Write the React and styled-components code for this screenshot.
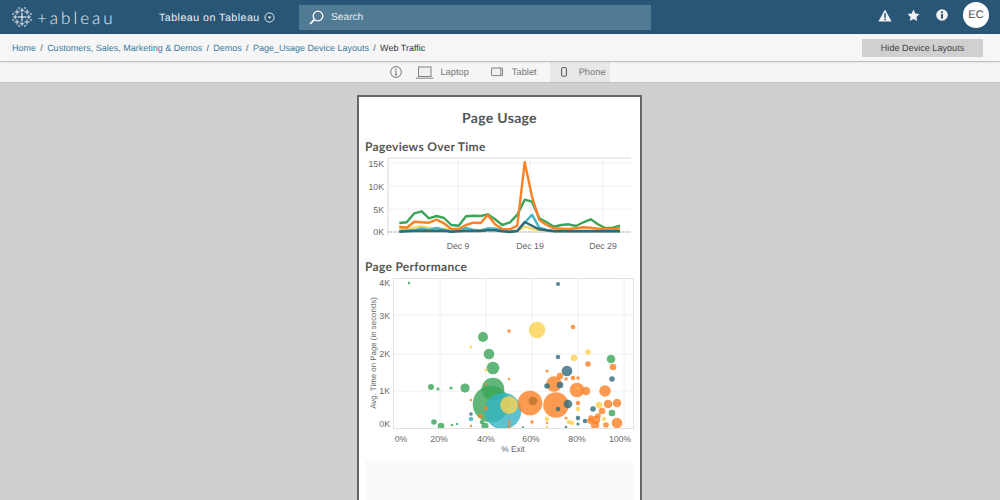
import React from "react";
import styled, { createGlobalStyle } from "styled-components";

const Global = createGlobalStyle`
  html, body { margin: 0; padding: 0; height: 100%; overflow: hidden; }
  body { font-family: "Liberation Sans", Arial, sans-serif; background: #cfcfcf; text-rendering: geometricPrecision; }
  #root { height: 500px; }
`;

const Page = styled.div`
  width: 1000px; height: 500px; display: flex; flex-direction: column; overflow: hidden; background: #cfcfcf;
`;
const TopBar = styled.header`
  height: 34px; flex: none; background: #2a5676; display: flex; align-items: center; color: #fff;
`;
const Logo = styled.div`
  display: flex; align-items: center; gap: 5px; width: 159px; padding-left: 12px; box-sizing: border-box; flex: none;
`;
const Wordmark = styled.span`
  font-family: Lato, sans-serif; font-weight: 300; font-size: 17px; letter-spacing: 3px; white-space: nowrap; color: #e8eef2; line-height: 1;
`;
const SiteName = styled.div`
  width: 140px; flex: none; display: flex; align-items: center; gap: 4px; padding-top: 1px; font-size: 10.6px; letter-spacing: 0.5px; color: #eef2f5; white-space: nowrap;
`;
const SearchBox = styled.div`
  width: 352px; height: 25px; flex: none; background: #517a94; display: flex; align-items: center; gap: 7px; padding-left: 10px; box-sizing: border-box; font-size: 10.2px; color: #e6edf1;
`;
const TopIcons = styled.div`
  margin-left: auto; display: flex; align-items: center; padding-right: 11px; gap: 15.5px;
`;
const Avatar = styled.div`
  width: 26px; height: 26px; border-radius: 50%; background: #fff; color: #3a4a58; font-size: 11px; display: flex; align-items: center; justify-content: center; margin-top: -4px;
`;
const IconSlot = styled.span`
  display: flex; margin-top: -4px;
`;
const CrumbBar = styled.nav`
  height: 27px; flex: none; background: #f6f6f6; display: flex; align-items: center; padding: 0 17px 0 12px; font-size: 9px; color: #444; box-shadow: 0 1px 2px rgba(0,0,0,.12); position: relative; white-space: nowrap;
`;
const Crumb = styled.span`
  color: #3a7a9e;
`;
const Sep = styled.span`
  margin: 0 4.3px; color: #555;
`;
const Current = styled.span`
  color: #333;
`;
const HideButton = styled.div`
  margin-left: auto; width: 121px; height: 18px; background: #d0d0d0; color: #444; font-size: 9.1px; display: flex; align-items: center; justify-content: center;
`;
const DeviceBar = styled.div`
  height: 20px; margin-top: 1px; flex: none; background: #f5f5f5; border-bottom: 1px solid #c4c4c4; display: flex; justify-content: center; align-items: stretch; font-size: 9.3px; color: #777;
`;
const InfoItem = styled.div`
  display: flex; align-items: center; padding: 0 6px 0 0;
`;
const DeviceTab = styled.div`
  display: flex; align-items: center; gap: ${p => p.$gap}px; padding: 0 ${p => p.$right}px 0 ${p => p.$left}px; background: ${p => (p.$active ? "#e8e8e8" : "transparent")};
`;
const Canvas = styled.main`
  flex: 1; min-height: 0; padding-top: 12px; display: flex; justify-content: center; background: #cfcfcf;
`;
const Phone = styled.div`
  width: 285px; height: 420px; box-sizing: border-box; border: 2px solid #666; background: #fff; padding: 0 6px; margin-left: -1px; flex: none; overflow: hidden;
`;
const Title = styled.h1`
  margin: 11px 0 11px; text-align: center; font-family: Lato, sans-serif; font-size: 14px; line-height: 20px; font-weight: 700; letter-spacing: .3px; color: #555;
`;
const SectionTitle = styled.h2`
  margin: 0; font-family: Lato, sans-serif; font-size: 12px; line-height: 16px; font-weight: 700; letter-spacing: .3px; color: #555;
`;
const ChartSvg = styled.svg`
  display: block;
`;
const AxisText = styled.text`
  font-family: "Liberation Sans", Arial, sans-serif; font-size: ${p => p.$size || 8.7}px; fill: #666;
`;
const EmptyPanel = styled.div`
  height: 60px; margin: 6px 0 0 0; background: #fafafa; width: 268px;
`;

/* ---- icons ---- */
const crosses = [
  [10, 10, 4.2, 1.2], [10, 3.2, 2.2, .9], [10, 16.8, 2.2, .9], [3.2, 10, 2.2, .9], [16.8, 10, 2.2, .9],
  [5, 5, 2.6, .9], [15, 5, 2.6, .9], [5, 15, 2.6, .9], [15, 15, 2.6, .9],
  [1, 7, 1, .6], [19, 7, 1, .6], [1, 13, 1, .6], [19, 13, 1, .6], [7, 1, 1, .6], [13, 1, 1, .6], [7, 19, 1, .6], [13, 19, 1, .6],
];
const TableauMark = () => (
  <svg width="20" height="20" viewBox="0 0 20 20" fill="#e8eef2">
    {crosses.map(([x, y, a, w], i) => (
      <g key={i}>
        <rect x={x - a} y={y - w / 2} width={a * 2} height={w} />
        <rect x={x - w / 2} y={y - a} width={w} height={a * 2} />
      </g>
    ))}
  </svg>
);
const Chevron = () => (
  <svg width="11" height="11" viewBox="0 0 11 11" fill="none" stroke="#e8eef2">
    <circle cx="5.5" cy="5.5" r="4.6" />
    <path d="M3.6 4.6h3.8L5.5 6.9z" fill="#e8eef2" stroke="none" />
  </svg>
);
const SearchIcon = () => (
  <svg width="15" height="15" viewBox="0 0 15 15" fill="none" stroke="#fff" strokeWidth="1.3">
    <circle cx="9" cy="6" r="4.8" />
    <path d="M5.6 9.4L1.2 13.8" strokeWidth="1.7" />
  </svg>
);
const Warn = () => (
  <svg width="14" height="13" viewBox="0 0 14 13">
    <path d="M7 .5L13.6 12.5H.4z" fill="#f0f3f5" />
    <rect x="6.2" y="4.2" width="1.6" height="4.6" fill="#2a5676" />
    <rect x="6.2" y="9.6" width="1.6" height="1.6" fill="#2a5676" />
  </svg>
);
const Star = () => (
  <svg width="13" height="13" viewBox="0 0 13 13">
    <path d="M6.5.6l1.8 3.9 4.2.5-3.1 2.9.8 4.2-3.7-2.1-3.7 2.1.8-4.2L.5 5l4.2-.5z" fill="#f0f3f5" />
  </svg>
);
const InfoSolid = () => (
  <svg width="12" height="12" viewBox="0 0 12 12">
    <circle cx="6" cy="6" r="5.8" fill="#f0f3f5" />
    <rect x="5" y="5" width="2" height="4.6" fill="#2a5676" />
    <rect x="5" y="2.4" width="2" height="1.7" fill="#2a5676" />
  </svg>
);
const InfoLine = () => (
  <svg width="12" height="12" viewBox="0 0 12 12" fill="none" stroke="#666" strokeWidth=".9">
    <circle cx="6" cy="6" r="5.4" />
    <path d="M6 5.2v3.6M4.9 8.8h2.2M5 5.2h1" />
    <circle cx="6" cy="3.2" r=".7" fill="#666" stroke="none" />
  </svg>
);
const LaptopIcon = () => (
  <svg width="18" height="13" viewBox="0 0 18 13" fill="none" stroke="#777" strokeWidth=".9">
    <rect x="2.5" y="1" width="12.5" height="9.5" fill="#f0f0f0" />
    <path d="M0 12.2h17.6" />
  </svg>
);
const TabletIcon = () => (
  <svg width="12" height="10" viewBox="0 0 12 10" fill="none" stroke="#777" strokeWidth=".9">
    <rect x=".5" y="1" width="11" height="7.6" rx=".6" fill="#f0f0f0" />
    <path d="M9.8 1v7.6" />
  </svg>
);
const PhoneIcon = () => (
  <svg width="6" height="10" viewBox="0 0 6 10" fill="none" stroke="#555" strokeWidth="1">
    <rect x=".6" y=".6" width="4.8" height="8.6" rx=".8" />
  </svg>
);

/* ---- line chart, screen coordinates relative to the chart origin (365,155) ---- */
const xs = [133,155,178,200,222,245,267,289,311,333,355,377,398,420,442,465,487,509,531,553,575,597,619,641,663,685,707,729,751,773,795];
const toPts = ys => xs.map((x, i) => `${(355 + x / 3 - 365).toFixed(1)},${(130 + ys[i] / 3 - 155).toFixed(1)}`).join(" ");
const series = [
  ["#f9d65f", [297,298,293,289,294,297,296,300,301,299,300,300,298,296,300,304,303,290,296,300,302,303,303,303,304,302,303,303,304,303,303]],
  ["#45b5c6", [303,302,301,295,300,294,300,304,302,294,300,302,295,296,301,304,302,278,254,293,300,303,303,303,303,303,303,303,303,303,303]],
  ["#3aa557", [279,277,250,244,265,258,264,285,287,259,257,258,253,268,285,277,254,209,215,265,277,290,285,283,288,277,268,283,295,293,287]],
  ["#fa8124", [290,293,275,277,278,269,280,297,297,285,278,279,255,283,297,298,287,97,200,270,285,295,296,297,295,292,293,296,298,298,295]],
  ["#2f6a7c", [305,304,303,302,303,303,302,305,304,303,303,303,301,301,304,306,303,276,287,298,301,304,304,304,304,304,304,304,304,304,304]],
];
const LineChart = () => (
  <ChartSvg width="271" height="104" viewBox="0 0 271 104">
    {[8, 31, 54].map(y => <line key={y} x1="23" x2="266" y1={y} y2={y} stroke="#f0f0f0" />)}
    {[93, 165, 238].map(x => <line key={x} x1={x} x2={x} y1="3" y2="77" stroke="#f0f0f0" />)}
    <line x1="23" x2="266" y1="3" y2="3" stroke="#dcdcdc" />
    <line x1="23" x2="23" y1="3" y2="81" stroke="#d8d8d8" />
    <line x1="23" x2="266" y1="77" y2="77" stroke="#999" strokeDasharray="1.5 1" />
    {series.map(([c, ys]) => (
      <polyline key={c} points={toPts(ys)} fill="none" stroke={c} strokeWidth="2.4" strokeLinejoin="round" />
    ))}
    {["15K", "10K", "5K", "0K"].map((t, i) => (
      <AxisText key={t} x="19" y={[12, 35, 58, 80][i]} textAnchor="end">{t}</AxisText>
    ))}
    {[["Dec 9", 93], ["Dec 19", 165], ["Dec 29", 238]].map(([t, x]) => (
      <AxisText key={t} x={x} y="94" textAnchor="middle">{t}</AxisText>
    ))}
  </ChartSvg>
);

/* ---- scatter: screen coordinates ---- */
const G = "#3aa557", Y = "#fdd24f", O = "#fa8124", T = "#2f6a7c", B = "#33b3c4";
const bubbles = [
  [491,403,18,G],[493,388,11,G],[503,410,18,B],[509,404,8.5,Y],[530,402,12,O],[533,400,4,"#b9762c"],[556,404,12.5,O],
  [554,383,7.5,O],[577,389,7,O],[605,390,5.5,O],[586,390,4,O],[537,329,8,Y],[483,336,4.7,G],[489,353,5,G],[493,367,6,G],
  [465,387,4.3,G],[431,386,2.7,G],[438,388,1.3,G],[451,387,1.3,G],[409,282,1,G],[471,346,1.3,Y],[486,369,1.3,Y],
  [558,283,1.8,T],[509,330,1.5,O],[573,326,2,O],[558,356,2,T],[588,351,2.5,Y],[574,357,3,Y],[611,358,4,G],[588,363,2.5,O],
  [613,366,3,O],[547,370,1.3,O],[567,370,5,T],[560,375,3,O],[573,377,2,O],[578,377,1.5,O],[566,378,1.5,O],[612,378,2.5,T],
  [509,378,1,O],[486,383,1,O],[471,399,1,O],[486,407,2,O],[471,413,1.5,T],[480,415,2,O],[471,418,2,B],[434,421,2.5,G],
  [441,425,3,G],[452,424,1,G],[457,423,1,G],[471,425,1,O],[485,425,3.3,G],[482,421,2,G],[558,408,2,T],[568,403,4,T],
  [547,385,2.5,T],[560,384,3,T],[578,387,1,Y],[578,402,2,O],[578,408,2,Y],[599,404,3,Y],[593,408,2.5,T],[608,403,4,O],
  [617,402,4,O],[602,410,3,O],[612,412,3,G],[547,418,2,Y],[566,417,1.3,O],[578,417,2,T],[578,423,1.3,T],[569,421,2,Y],
  [572,422,2,Y],[591,417,2.5,O],[585,420,2,T],[598,415,2.5,O],[596,419,4,O],[595,424,4,O],[590,420,2.5,O],[604,418,2,Y],
  [606,424,2.5,O],[617,422,5,O],[532,421,1.5,O],[547,422,1,O],[509,420,1,O],[509,423,1,O],[509,426,1,O],[547,426,1,Y],[566,426,1,T],[523,426,.8,G],
];
const OX = 365, OY = 274;
const Scatter = () => (
  <ChartSvg width="271" height="180" viewBox="0 0 271 180">
    <defs>
      <clipPath id="plot"><rect x="29" y="3" width="240" height="150" /></clipPath>
    </defs>
    {[314, 353, 390].map(y => <line key={y} x1={29} x2={268} y1={y - OY} y2={y - OY} stroke="#f0f0f0" />)}
    {[440, 486, 532, 578, 624].map(x => <line key={x} x1={x - OX} x2={x - OX} y1="3" y2="153" stroke="#f0f0f0" />)}
    <rect x="28.5" y="3.5" width="240" height="150" fill="none" stroke="#e2e2e2" />
    <g clipPath="url(#plot)">
      {bubbles.map(([x, y, r, c], i) => <circle key={i} cx={x - OX} cy={y - OY} r={r + 0.3} fill={c} fillOpacity=".8" />)}
    </g>
    {["4K", "3K", "2K", "1K", "0K"].map((t, i) => (
      <AxisText key={t} x="25" y={[11, 44, 82, 119, 152][i]} textAnchor="end">{t}</AxisText>
    ))}
    {[["0%", 401], ["20%", 439], ["40%", 486], ["60%", 531], ["80%", 577], ["100%", 620]].map(([t, x]) => (
      <AxisText key={t} x={x - OX} y="167" textAnchor="middle">{t}</AxisText>
    ))}
    <AxisText x="148" y="177" textAnchor="middle" $size={8.4}>% Exit</AxisText>
    <AxisText transform="translate(11 78) rotate(-90)" textAnchor="middle" $size={7.9}>Avg. Time on Page (in seconds)</AxisText>
  </ChartSvg>
);

export default function App() {
  return (
    <Page>
      <Global />
      <TopBar>
        <Logo><TableauMark /><Wordmark>+ableau</Wordmark></Logo>
        <SiteName>Tableau on Tableau <Chevron /></SiteName>
        <SearchBox><SearchIcon />Search</SearchBox>
        <TopIcons>
          <IconSlot><Warn /></IconSlot>
          <IconSlot><Star /></IconSlot>
          <IconSlot><InfoSolid /></IconSlot>
          <Avatar>EC</Avatar>
        </TopIcons>
      </TopBar>
      <CrumbBar>
        <Crumb>Home</Crumb><Sep>/</Sep>
        <Crumb>Customers, Sales, Marketing &amp; Demos</Crumb><Sep>/</Sep>
        <Crumb>Demos</Crumb><Sep>/</Sep>
        <Crumb>Page_Usage Device Layouts</Crumb><Sep>/</Sep>
        <Current>Web Traffic</Current>
        <HideButton>Hide Device Layouts</HideButton>
      </CrumbBar>
      <DeviceBar>
        <InfoItem><InfoLine /></InfoItem>
        <DeviceTab $gap={6} $left={8} $right={22}><LaptopIcon />Laptop</DeviceTab>
        <DeviceTab $gap={9} $left={0} $right={13}><TabletIcon />Tablet</DeviceTab>
        <DeviceTab $active $gap={12} $left={11} $right={4}><PhoneIcon />Phone</DeviceTab>
      </DeviceBar>
      <Canvas>
        <Phone>
          <Title>Page Usage</Title>
          <SectionTitle>Pageviews Over Time</SectionTitle>
          <LineChart />
          <SectionTitle>Page Performance</SectionTitle>
          <Scatter />
          <EmptyPanel />
        </Phone>
      </Canvas>
    </Page>
  );
}
